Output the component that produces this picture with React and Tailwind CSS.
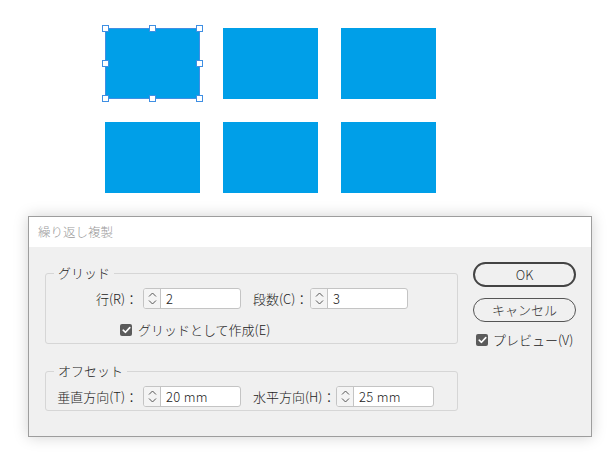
import React from "react";

const font = {
  fontFamily: '"Noto Sans CJK JP", "Noto Sans", sans-serif',
};

function Handle({ className }) {
  return (
    <div
      className={
        "absolute w-[7px] h-[7px] bg-white border border-[#3f8fe3] " + className
      }
    />
  );
}

function Rect({ selected }) {
  return (
    <div className="relative h-[71px] bg-[#009fe8]">
      {selected && (
        <>
          <div className="absolute inset-0 border border-[#3f8fe3]" />
          <Handle className="-left-[3px] -top-[3px]" />
          <Handle className="left-[44px] -top-[3px]" />
          <Handle className="-right-[3px] -top-[3px]" />
          <Handle className="-left-[3px] top-[32px]" />
          <Handle className="-right-[3px] top-[32px]" />
          <Handle className="-left-[3px] -bottom-[3px]" />
          <Handle className="left-[44px] -bottom-[3px]" />
          <Handle className="-right-[3px] -bottom-[3px]" />
        </>
      )}
    </div>
  );
}

function Spinner({ value }) {
  return (
    <div className="flex h-[21px] w-[98px] border border-[#c4c4c4] rounded-[3px] bg-white overflow-hidden">
      <div className="w-[17px] border-r border-[#c4c4c4] bg-[#f4f4f4] flex items-center justify-center">
        <svg width="9" height="15" viewBox="0 0 9 15" fill="none">
          <path d="M1 5.5 L4.5 2 L8 5.5" stroke="#555" strokeWidth="1" />
          <path d="M1 9.5 L4.5 13 L8 9.5" stroke="#555" strokeWidth="1" />
        </svg>
      </div>
      <div className="pl-[5px] flex items-center text-[13px] text-[#222] tracking-[0.3px]">
        {value}
      </div>
    </div>
  );
}

function Check({ className }) {
  return (
    <div
      className={
        "w-[12px] h-[12px] rounded-[2px] bg-[#5b5b5b] flex items-center justify-center " +
        (className || "")
      }
    >
      <svg width="9" height="8" viewBox="0 0 9 8" fill="none">
        <path
          d="M1.2 4.2 L3.5 6.3 L7.8 1.6"
          stroke="#fff"
          strokeWidth="1.6"
          strokeLinecap="round"
          strokeLinejoin="round"
        />
      </svg>
    </div>
  );
}

function Group({ title, className, children }) {
  return (
    <fieldset
      className={
        "border border-[#d6d6d6] rounded-[3px] w-[413px] " + (className || "")
      }
    >
      <legend className="ml-[8px] px-[4px] leading-[16px] text-[13px] text-[#222]">
        {title}
      </legend>
      {children}
    </fieldset>
  );
}

export default function App() {
  return (
    <div className="min-h-screen bg-white font-light" style={font}>
      {/* artboard */}
      <div className="pt-[28px] pl-[105px]">
        <div className="grid grid-cols-[95px_95px_95px] gap-x-[23px] gap-y-[23px]">
          <Rect selected />
          <Rect />
          <Rect />
          <Rect />
          <Rect />
          <Rect />
        </div>
      </div>

      {/* dialog */}
      <div className="ml-[28px] mt-[23px] w-[564px] h-[221px] border border-[#9d9d9d] bg-[#f0f0f0] shadow-[0_0_14px_rgba(0,0,0,0.18)] flex flex-col">
        <div className="h-[30px] bg-white flex items-center pl-[9px] text-[12.5px] text-[#9a9a9a]">
          繰り返し複製
        </div>

        <div className="flex pl-[16px] text-[13px] text-[#222]">
          <div className="flex flex-col">
            <Group title="グリッド" className="mt-[18px] pb-[5px]">
              <div className="flex items-center h-[21px] mt-[7px]">
                <div className="w-[92px] text-right">行(R)：</div>
                <div className="ml-[5px]">
                  <Spinner value="2" />
                </div>
                <div className="ml-[12px] w-[52px] whitespace-nowrap">
                  段数(C)：
                </div>
                <div className="ml-[5px]">
                  <Spinner value="3" />
                </div>
              </div>
              <div className="flex items-center h-[16px] mt-[13px] pl-[74px]">
                <Check />
                <span className="ml-[6px]">グリッドとして作成(E)</span>
              </div>
            </Group>

            <Group title="オフセット" className="mt-[19px] pb-[3px]">
              <div className="flex items-center h-[21px] mt-[7px]">
                <div className="w-[92px] text-right whitespace-nowrap">
                  垂直方向(T)：
                </div>
                <div className="ml-[5px]">
                  <Spinner value="20 mm" />
                </div>
                <div className="ml-[12px] w-[78px] whitespace-nowrap">
                  水平方向(H)：
                </div>
                <div className="ml-[5px]">
                  <Spinner value="25 mm" />
                </div>
              </div>
            </Group>
          </div>

          <div className="ml-[15px] w-[103px] flex flex-col">
            <button className="mt-[15px] h-[25px] rounded-full border-2 border-[#444] text-[13px] text-[#333] flex items-center justify-center">
              OK
            </button>
            <button className="mt-[11px] h-[24px] rounded-full border border-[#555] text-[13px] text-[#333] flex items-center justify-center">
              キャンセル
            </button>
            <div className="mt-[10px] flex items-center h-[16px] pl-[3px]">
              <Check />
              <span className="ml-[5px]">プレビュー(V)</span>
            </div>
          </div>
        </div>
      </div>
    </div>
  );
}
